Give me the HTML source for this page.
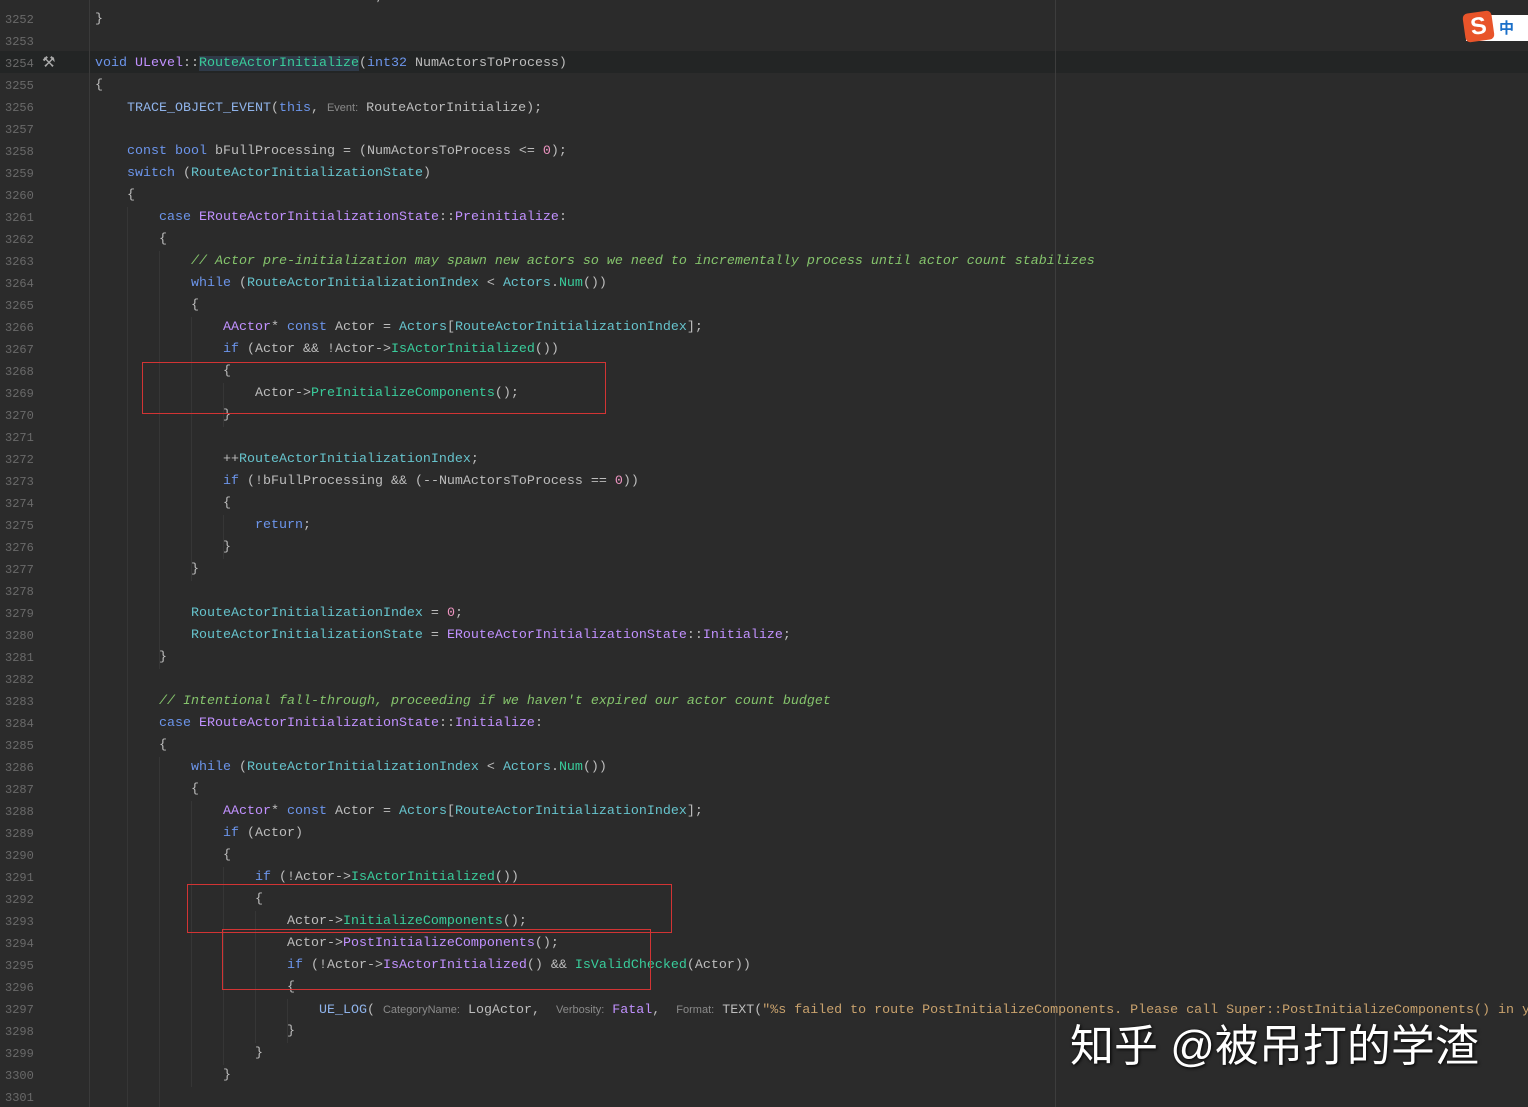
<!DOCTYPE html>
<html><head><meta charset="utf-8"><style>
html,body{margin:0;padding:0;background:#2b2b2b;width:1528px;height:1107px;overflow:hidden;position:relative;font-family:"Liberation Mono",monospace;}
.ln{position:absolute;left:5px;width:30px;font-size:12px;color:#6a6a6a;height:22px;line-height:22px;}
.c{position:absolute;left:95px;height:22px;line-height:22px;font-size:13.33px;color:#bdbdbd;white-space:pre;}
.k{color:#6c95eb}.t{color:#c191ff}.f{color:#66c3cc}.m{color:#39cc9b}.cm{color:#85c46c;font-style:italic}.n{color:#ed94c0}.s{color:#c9a26d}.p{color:#8fb3ea}
.h{font-family:"Liberation Sans",sans-serif;font-size:11px;color:#8a8a8a;}
.box{position:absolute;border:1px solid #d23434;}
.g{position:absolute;width:1px;background:#363636;}
</style></head><body>
<div style="position:absolute;left:0;top:51px;width:1528px;height:22px;background:#232525"></div>
<div style="position:absolute;left:89px;top:0;width:1px;height:1107px;background:#3a3a3a"></div>
<div style="position:absolute;left:1055px;top:0;width:1px;height:1107px;background:#3d3d3d"></div>
<div class="g" style="left:127px;top:207px;height:900px"></div>
<div class="g" style="left:159px;top:251px;height:418px"></div>
<div class="g" style="left:159px;top:757px;height:350px"></div>
<div class="g" style="left:191px;top:317px;height:264px"></div>
<div class="g" style="left:191px;top:801px;height:286px"></div>
<div class="g" style="left:223px;top:383px;height:44px"></div>
<div class="g" style="left:223px;top:515px;height:44px"></div>
<div class="g" style="left:223px;top:867px;height:198px"></div>
<div class="g" style="left:255px;top:911px;height:132px"></div>
<div class="g" style="left:287px;top:999px;height:44px"></div>
<div id="L"></div>
<script>
var L=[
[3251,"    <span class=f>NotActorInitializationIndex</span> = <span class=n>0</span>;"],
[3252,"}"],[3253,""],
[3254,"<span class=k>void</span> <span class=t>ULevel</span>::<span class=m style='background:#2f3a48'>RouteActorInitialize</span>(<span class=k>int32</span> NumActorsToProcess)"],
[3255,"{"],
[3256,"    <span class=p>TRACE_OBJECT_EVENT</span>(<span class=k>this</span>, <span class=h>Event:</span> RouteActorInitialize);"],
[3257,""],
[3258,"    <span class=k>const bool</span> bFullProcessing = (NumActorsToProcess <= <span class=n>0</span>);"],
[3259,"    <span class=k>switch</span> (<span class=f>RouteActorInitializationState</span>)"],
[3260,"    {"],
[3261,"        <span class=k>case</span> <span class=t>ERouteActorInitializationState</span>::<span class=t>Preinitialize</span>:"],
[3262,"        {"],
[3263,"            <span class=cm>// Actor pre-initialization may spawn new actors so we need to incrementally process until actor count stabilizes</span>"],
[3264,"            <span class=k>while</span> (<span class=f>RouteActorInitializationIndex</span> < <span class=f>Actors</span>.<span class=m>Num</span>())"],
[3265,"            {"],
[3266,"                <span class=t>AActor</span>* <span class=k>const</span> Actor = <span class=f>Actors</span>[<span class=f>RouteActorInitializationIndex</span>];"],
[3267,"                <span class=k>if</span> (Actor && !Actor-><span class=m>IsActorInitialized</span>())"],
[3268,"                {"],
[3269,"                    Actor-><span class=m>PreInitializeComponents</span>();"],
[3270,"                }"],
[3271,""],
[3272,"                ++<span class=f>RouteActorInitializationIndex</span>;"],
[3273,"                <span class=k>if</span> (!bFullProcessing && (--NumActorsToProcess == <span class=n>0</span>))"],
[3274,"                {"],
[3275,"                    <span class=k>return</span>;"],
[3276,"                }"],
[3277,"            }"],
[3278,""],
[3279,"            <span class=f>RouteActorInitializationIndex</span> = <span class=n>0</span>;"],
[3280,"            <span class=f>RouteActorInitializationState</span> = <span class=t>ERouteActorInitializationState</span>::<span class=t>Initialize</span>;"],
[3281,"        }"],
[3282,""],
[3283,"        <span class=cm>// Intentional fall-through, proceeding if we haven't expired our actor count budget</span>"],
[3284,"        <span class=k>case</span> <span class=t>ERouteActorInitializationState</span>::<span class=t>Initialize</span>:"],
[3285,"        {"],
[3286,"            <span class=k>while</span> (<span class=f>RouteActorInitializationIndex</span> < <span class=f>Actors</span>.<span class=m>Num</span>())"],
[3287,"            {"],
[3288,"                <span class=t>AActor</span>* <span class=k>const</span> Actor = <span class=f>Actors</span>[<span class=f>RouteActorInitializationIndex</span>];"],
[3289,"                <span class=k>if</span> (Actor)"],
[3290,"                {"],
[3291,"                    <span class=k>if</span> (!Actor-><span class=m>IsActorInitialized</span>())"],
[3292,"                    {"],
[3293,"                        Actor-><span class=m>InitializeComponents</span>();"],
[3294,"                        Actor-><span class=t>PostInitializeComponents</span>();"],
[3295,"                        <span class=k>if</span> (!Actor-><span class=t>IsActorInitialized</span>() && <span class=m>IsValidChecked</span>(Actor))"],
[3296,"                        {"],
[3297,"                            <span class=p>UE_LOG</span>( <span class=h>CategoryName:</span> LogActor,  <span class=h>Verbosity:</span> <span class=t>Fatal</span>,  <span class=h>Format:</span> TEXT(<span class=s>\"%s failed to route PostInitializeComponents. Please call Super::PostInitializeComponents() in your </span>"],
[3298,"                        }"],
[3299,"                    }"],
[3300,"                }"],
[3301,""]
];
var h="";L.forEach(function(r){var y=9+(r[0]-3252)*22;
if(r[0]>3251)h+='<div class="ln" style="top:'+y+'px">'+r[0]+'</div>';
h+='<div class="c" style="top:'+y+'px">'+r[1]+'</div>';});
document.getElementById("L").innerHTML=h;
</script>
<div class="box" style="left:142px;top:362px;width:462px;height:50px"></div>
<div class="box" style="left:187px;top:884px;width:483px;height:47px"></div>
<div class="box" style="left:222px;top:929px;width:427px;height:59px"></div>
<div style="position:absolute;left:42px;top:53px;color:#aaa;font-size:15px">&#9874;</div>
<div style="position:absolute;left:1466px;top:15px;width:70px;height:26px;background:#fff"></div>
<div style="position:absolute;left:1464px;top:12px;width:29px;height:29px;background:#e8542a;border-radius:5px;transform:rotate(-8deg);color:#fff;font:bold 24px 'Liberation Sans',sans-serif;text-align:center;line-height:29px">S</div>
<div style="position:absolute;left:1499px;top:17px;color:#1a6fc9;font:bold 15px 'Noto Sans CJK SC',sans-serif">中</div>
<div style="position:absolute;left:1070px;top:1010px;color:#fff;font:44px 'Liberation Sans','Noto Sans CJK SC',sans-serif;text-shadow:1px 1px 3px #000;white-space:nowrap">知乎 @被吊打的学渣</div>
</body></html>
